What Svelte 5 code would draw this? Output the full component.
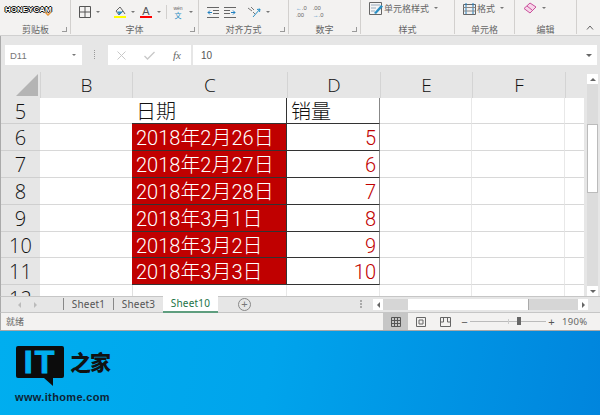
<script>
    const columns = [
        { name: "B", width: 92 },
        { name: "C", width: 155 },
        { name: "D", width: 93 },
        { name: "E", width: 92 },
        { name: "F", width: 93 },
        { name: "", width: 19 }
    ];

    const rows = [
        { num: 5, date: "日期", sales: "销量", head: true, height: 26 },
        { num: 6, date: "2018年2月26日", sales: 5, height: 27 },
        { num: 7, date: "2018年2月27日", sales: 6, height: 27 },
        { num: 8, date: "2018年2月28日", sales: 7, height: 27 },
        { num: 9, date: "2018年3月1日", sales: 8, height: 27 },
        { num: 10, date: "2018年3月2日", sales: 9, height: 26 },
        { num: 11, date: "2018年3月3日", sales: 10, height: 27 }
    ];

    const sheets = ["Sheet1", "Sheet3", "Sheet10"];
    const groups = [
        { label: "剪贴板", width: 70, launcher: true },
        { label: "字体", width: 128, launcher: true },
        { label: "对齐方式", width: 90, launcher: true },
        { label: "数字", width: 72, launcher: true },
        { label: "样式", width: 94 },
        { label: "单元格", width: 60 },
        { label: "编辑", width: 62 }
    ];
</script>

<div class="excel">
    <div class="ribbon">
        {#each groups as g, i}
            <div class="group" style={`width:${g.width}px`}>
                <div class="tools tools-{i}">
                    {#if i == 0}
                        <span class="honeycam">HONEYCAM</span>
                        <svg class="paste-hint" width="8" height="5" viewBox="0 0 8 5"><path d="M1 1l3 3 3-3" fill="none" stroke="#e8963c" stroke-width="1.500"/></svg>
                    {:else if i == 1}
                        <svg width="12" height="12" viewBox="0 0 12 12" class="ml8"><path d="M.5.500h11v11H.5zM6 .5v11M.5 6h11" fill="none" stroke="#555"/></svg>
                        <i class="caret"></i>
                        <span class="stack ml14">
                            <svg width="12" height="10" viewBox="0 0 12 10"><path d="M6 1 2 5l3 4 4-4zM9 5l2 3" fill="none" stroke="#666"/><path d="M3 5.500h6L5.500 9z" fill="#2a8fc4"/></svg>
                            <b class="bar yellow"></b>
                        </span>
                        <i class="caret"></i>
                        <span class="stack ml5">
                            <span class="letter-a">A</span>
                            <b class="bar red"></b>
                        </span>
                        <i class="caret"></i>
                        <span class="sep-v"></span>
                        <span class="wen"><small>wén</small><em>文</em></span>
                        <i class="caret"></i>
                    {:else if i == 2}
                        <svg width="12" height="11" viewBox="0 0 12 11" class="ml8"><path d="M0 .5h12M6 3.500h6M6 6.500h6M0 10.500h12" stroke="#666" fill="none"/><path d="M5 5.500H1M3 3.500l-2 2 2 2" stroke="#1f7fc0" fill="none"/></svg>
                        <svg width="12" height="11" viewBox="0 0 12 11" class="ml5"><path d="M0 .5h12M0 3.500h6M0 6.500h6M0 10.500h12" stroke="#666" fill="none"/><path d="M7 5.500h4M9 3.500l2 2-2 2" stroke="#1f7fc0" fill="none"/></svg>
                        <svg width="14" height="12" viewBox="0 0 14 12" class="ml11"><path d="M1 2l4 3M4 1l3 3M6 6l2 2" stroke="#777" fill="none"/><path d="M6 11 13 3M13 3l-3 .5M13 3l-.5 3" stroke="#2a8fc4" fill="none"/></svg>
                        <i class="caret"></i>
                    {:else if i == 3}
                        <span class="dec ml7"><small><u>←</u>.0</small><small>.00</small></span>
                        <span class="dec ml6"><small>.00</small><small><u>→</u>.0</small></span>
                    {:else if i == 4}
                        <svg width="14" height="13" viewBox="0 0 14 13" class="ml8"><path d="M.5.500h12v12H.5z" fill="#f5f5f5" stroke="#666"/><path d="M2 3h9M2 6h5M2 9h4" stroke="#9ab"/><path d="M5 11 12 3l2 1.500L7 12z" fill="#2a8fc4"/></svg>
                        <span class="tool-text">单元格样式</span>
                        <i class="caret"></i>
                    {:else if i == 5}
                        <svg width="13" height="13" viewBox="0 0 13 13" class="ml8"><path d="M.5 2.500h12v10H.5z" fill="none" stroke="#666"/><path d="M3 1v11M10 1v11" stroke="#1f7fc0"/><path d="M.5 5.500h12M.5 9h12" stroke="#888"/></svg>
                        <span class="tool-text">格式</span>
                        <i class="caret"></i>
                    {:else}
                        <svg width="14" height="12" viewBox="0 0 14 12" class="ml8"><path d="M1 6.500 7 1l6 4-6 6z" fill="#f6d5e8" stroke="#c94f9b"/><path d="M4 4l5 4" stroke="#c94f9b"/></svg>
                        <i class="caret"></i>
                    {/if}
                </div>
                <div class="group-label">{g.label}</div>
                {#if g.launcher}<i class="launcher"></i>{/if}
            </div>
        {/each}
        <svg class="collapse" width="8" height="5" viewBox="0 0 8 5"><path d="M1 4.500 4 1l3 3.500" fill="none" stroke="#666"/></svg>
    </div>

    <div class="formula-bar">
        <div class="name-box">D11<i class="caret"></i></div>
        <div class="grip"></div>
        <div class="fx-buttons">
            <svg width="9" height="9" viewBox="0 0 9 9"><path d="M.5.500l8 8M8.500.500l-8 8" stroke="#c8c8c8" fill="none"/></svg>
            <svg width="11" height="9" viewBox="0 0 11 9"><path d="M.5 5l3 3 7-7" stroke="#c8c8c8" stroke-width="1.300" fill="none"/></svg>
            <span class="fx">fx</span>
        </div>
        <div class="formula-input">10<i class="caret dark"></i></div>
    </div>

    <div class="sheet-area">
        <div class="grid">
            <div class="header-row">
                <div class="corner"><i></i></div>
                {#each columns as col}
                    <div class="col-head" style={`width:${col.width}px`}>{col.name}</div>
                {/each}
            </div>
            {#each rows as row}
                <div class="row" style={`height:${row.height}px`}>
                    <div class="row-head">{row.num}</div>
                    <div class="cell b"></div>
                    <div class="cell c" class:filled={!row.head} class:head={row.head}>{row.date}</div>
                    <div class="cell d" class:head={row.head}>{row.sales}</div>
                    <div class="cell e"></div>
                    <div class="cell f"></div>
                    <div class="cell g"></div>
                </div>
            {/each}
            <div class="row last">
                <div class="row-head clip"><span>12</span></div>
                <div class="cell b"></div>
                <div class="cell c"></div>
                <div class="cell d2"></div>
                <div class="cell e"></div>
                <div class="cell f"></div>
                <div class="cell g"></div>
            </div>
        </div>
        <div class="v-scroll">
            <div class="v-btn"><i class="up"></i></div>
            <div class="v-track"><div class="v-thumb"></div></div>
            <div class="v-btn"><i class="down"></i></div>
        </div>
    </div>

    <div class="tab-bar">
        <div class="tab-nav"><i class="left"></i><i class="right"></i></div>
        {#each sheets as s, i}
            <div class="tab" class:active={i == 2}>{s}</div>
        {/each}
        <div class="add-tab">+</div>
        <div class="h-grip"></div>
        <div class="h-scroll">
            <div class="h-btn"><i class="h-left"></i></div>
            <div class="h-track"><div class="h-thumb"></div></div>
            <div class="h-btn"><i class="h-right"></i></div>
        </div>
    </div>

    <div class="status-bar">
        <span class="ready">就绪</span>
        <div class="views">
            <div class="view on">
                <svg width="10" height="10" viewBox="0 0 10 10"><path d="M.5.500h9v9h-9zM3.500.500v9M6.500.500v9M.5 3.500h9M.5 6.500h9" fill="none" stroke="#555"/></svg>
            </div>
            <div class="view">
                <svg width="10" height="10" viewBox="0 0 10 10"><path d="M.5.500h9v9h-9z" fill="none" stroke="#666"/><path d="M3 3h4v4H3z" fill="none" stroke="#666"/></svg>
            </div>
            <div class="view">
                <svg width="11" height="10" viewBox="0 0 11 10"><path d="M.5.500h10v9H.5zM.5 5h3V.500M7.500.500V5h3" fill="none" stroke="#666"/></svg>
            </div>
        </div>
        <div class="zoom">
            <span class="zoom-sign">−</span>
            <div class="slider"><i class="mid"></i><i class="knob"></i></div>
            <span class="zoom-sign">+</span>
        </div>
        <span class="percent">190%</span>
    </div>

    <div class="footer">
        <div class="logo">
            <div class="logo-top">
                <div class="bubble">IT</div>
                <div class="logo-cn">之家</div>
            </div>
            <div class="site">www.ithome.com</div>
        </div>
    </div>
</div>

<style>
    :global(body) {
        margin: 0;
    }

    .excel {
        width: 600px;
        height: 415px;
        overflow: hidden;
        display: flex;
        flex-direction: column;
        background: #e6e6e6;
        font-family: "Noto Sans CJK SC", "Liberation Sans", sans-serif;
        color: #444;
    }

    .ribbon {
        height: 36px;
        flex: none;
        display: flex;
        background: #f3f2f1;
        border-bottom: 1px solid #d0d0d0;
        box-sizing: border-box;
        position: relative;
        padding-left: 1px;
    }

    .group {
        position: relative;
        box-sizing: border-box;
        border-right: 1px solid #d2d0ce;
        height: 34px;
        flex: none;
    }

    .tools {
        height: 24px;
        display: flex;
        align-items: center;
    }

    .tools-4, .tools-5, .tools-6 {
        height: 16px;
    }

    .group-label {
        position: absolute;
        left: 0;
        right: 0;
        top: 24px;
        text-align: center;
        font-size: 9px;
        line-height: 12px;
        color: #666;
    }

    .launcher {
        position: absolute;
        right: 3px;
        bottom: 2px;
        width: 4px;
        height: 4px;
        border-left: 1px solid #999;
        border-bottom: 1px solid #999;
        transform: scaleX(-1);
    }

    .honeycam {
        margin: -6px 0 0 4px;
        font: bold 8px "Liberation Sans", sans-serif;
        color: #fff;
        text-shadow: -1px 0 #000, 1px 0 #000, 0 -1px #000, 0 1px #000;
    }

    .paste-hint {
        position: absolute;
        left: 43px;
        top: 11px;
    }

    .caret {
        display: inline-block;
        width: 0;
        height: 0;
        margin-left: 5px;
        border: 2px solid transparent;
        border-top: 2px solid #777;
        border-bottom: 0;
    }

    .ml14 { margin-left: 14px; }
    .ml11 { margin-left: 11px; }
    .ml8 { margin-left: 8px; }
    .ml7 { margin-left: 7px; }
    .ml6 { margin-left: 6px; }
    .ml5 { margin-left: 5px; }

    .stack {
        display: inline-flex;
        flex-direction: column;
        align-items: center;
        width: 12px;
    }

    .bar {
        display: block;
        width: 12px;
        height: 2px;
    }

    .yellow { background: #ffff00; }
    .red { background: #ff0000; }

    .letter-a {
        font: 11px/10px "Liberation Sans", sans-serif;
        color: #555;
    }

    .sep-v {
        width: 1px;
        height: 14px;
        margin: 0 5px;
        background: #d2d0ce;
    }

    .wen {
        display: inline-flex;
        flex-direction: column;
        align-items: center;
        width: 12px;
    }

    .wen small {
        display: block;
        height: 6px;
        font: 5px/6px "Liberation Sans", sans-serif;
        color: #666;
    }

    .wen em {
        display: block;
        height: 8px;
        font-style: normal;
        font-size: 7px;
        line-height: 8px;
        color: #2a8fc4;
    }

    .dec {
        display: inline-flex;
        flex-direction: column;
        font: 7px/7px "Liberation Sans", sans-serif;
        color: #666;
    }

    .dec u {
        text-decoration: none;
        color: #1f7fc0;
    }

    .tool-text {
        margin-left: 1px;
        font-size: 9px;
        color: #666;
    }

    .collapse {
        position: absolute;
        right: 6px;
        bottom: 5px;
    }

    .formula-bar {
        height: 36px;
        flex: none;
        box-sizing: border-box;
        padding: 9px 3px 7px 4px;
        display: flex;
        border-left: 1px solid #aaa;
    }

    .name-box {
        width: 77px;
        background: #fff;
        font: 9.500px/19px "Liberation Sans", sans-serif;
        padding-left: 5px;
        box-sizing: border-box;
        color: #777;
        display: flex;
        justify-content: space-between;
        align-items: center;
        padding-right: 6px;
    }

    .grip {
        width: 1px;
        height: 9px;
        margin: 5px 12px 0;
        border-left: 1px dotted #999;
    }

    .fx-buttons {
        width: 83px;
        background: #fff;
        margin-right: 2px;
        display: flex;
        align-items: center;
        gap: 18px;
        padding-left: 9px;
        box-sizing: border-box;
    }

    .fx {
        font: italic 11px "Liberation Serif", serif;
        color: #666;
    }

    .formula-input {
        flex: 1;
        background: #fff;
        font: 10px/19px "Liberation Sans", sans-serif;
        padding: 0 5px 0 8px;
        color: #555;
        display: flex;
        justify-content: space-between;
        align-items: center;
    }

    .caret.dark {
        border-width: 3px;
        border-top-color: #666;
        border-bottom: 0;
    }

    .sheet-area {
        height: 224px;
        flex: none;
        display: flex;
        border-left: 1px solid #aaa;
    }

    .grid {
        width: 583px;
        flex: none;
        overflow: hidden;
    }

    .header-row {
        display: flex;
        height: 26px;
        background: #e6e6e6;
    }

    .corner {
        width: 39px;
        flex: none;
        box-sizing: border-box;
        padding: 2px 2px 2px 15px;
    }

    .corner i {
        display: block;
        width: 22px;
        height: 22px;
        background: #b4b4b4;
        clip-path: polygon(100% 0, 100% 100%, 0 100%);
    }

    .col-head {
        flex: none;
        box-sizing: border-box;
        border-left: 1px solid #d4d4d4;
        text-align: center;
        font: 300 19px/26px "Open Sans", sans-serif;
        color: #111;
    }

    .row {
        display: flex;
        box-sizing: border-box;
    }

    .row.last {
        height: 11px;
    }

    .row-head {
        width: 39px;
        flex: none;
        background: #e6e6e6;
        box-sizing: border-box;
        border-bottom: 1px solid #cfcfcf;
        text-align: center;
        font: 300 20px/27px "Open Sans", sans-serif;
        color: #111;
    }

    .row-head.clip {
        overflow: hidden;
        border-bottom: 0;
    }

    .cell {
        flex: none;
        background: #fff;
        box-sizing: border-box;
        border-right: 1px solid #e8e8e8;
        border-bottom: 1px solid #d8d8d8;
    }

    .row.last .cell {
        border-bottom: 0;
    }

    .b { width: 92px; border-right: 0; }
    .e { width: 92px; }
    .f { width: 93px; }
    .g { width: 20px; border-right: 1px solid #bbb; }

    .c {
        width: 155px;
        padding-left: 3px;
        padding-top: 3px;
        font-family: "Roboto", "Noto Sans CJK SC", sans-serif;
        font-weight: 300;
        font-size: 20px;
        line-height: 23px;
        white-space: nowrap;
        border-left: 1px solid #e0e0e0;
    }

    .c.head {
        color: #111;
        border-left: 0;
        padding-left: 4px;
        border-right: 1px solid #333;
        border-bottom: 1px solid #333;
    }

    .c.filled {
        background: #c00000;
        color: #fff;
        border-left: 0;
        padding-left: 4px;
        border-right: 1px solid #333;
        border-bottom: 1px solid #333;
    }

    .d {
        width: 93px;
        padding-right: 3px;
        padding-top: 3px;
        text-align: right;
        font-family: "Roboto", "Noto Sans CJK SC", sans-serif;
        font-weight: 300;
        font-size: 20px;
        line-height: 23px;
        color: #c00000;
        border-right: 1px solid #888;
        border-bottom: 1px solid #333;
    }

    .d.head {
        color: #111;
        text-align: left;
        padding-left: 4px;
    }

    .d2 {
        width: 93px;
    }

    .v-scroll {
        width: 11px;
        flex: none;
        margin: 2px 0 0 3px;
        background: #dcdcdc;
        display: flex;
        flex-direction: column;
    }

    .v-track {
        flex: 1;
        padding-top: 40px;
    }

    .v-thumb {
        height: 69px;
        background: #fff;
        box-shadow: 0 0 0 1px #bbb inset;
    }

    .v-btn {
        height: 10px;
        background: #fff;
        display: flex;
        align-items: center;
        justify-content: center;
    }

    .up, .down {
        width: 0;
        height: 0;
        border: 3px solid transparent;
    }

    .up {
        border-bottom: 3px solid #666;
        border-top: 0;
    }

    .down {
        border-top: 3px solid #666;
        border-bottom: 0;
    }

    .tab-bar {
        height: 17px;
        flex: none;
        box-sizing: border-box;
        display: flex;
        align-items: stretch;
        border-top: 1px solid #c6c6c6;
        border-bottom: 1px solid #c6c6c6;
        border-left: 1px solid #aaa;
        background: #e6e6e6;
    }

    .tab-nav {
        width: 62px;
        flex: none;
        display: flex;
        gap: 13px;
        padding-left: 17px;
        box-sizing: border-box;
        align-items: center;
    }

    .left, .right {
        width: 0;
        height: 0;
        border: 3px solid transparent;
    }

    .left {
        border-right: 3px solid #bbb;
        border-left: 0;
    }

    .right {
        border-left: 3px solid #bbb;
        border-right: 0;
    }

    .tab {
        border-left: 1px solid #888;
        margin: 1px 0 2px;
        width: 49px;
        font: 10px/12px "Noto Sans", sans-serif;
        letter-spacing: .2px;
        text-align: center;
        color: #555;
    }

    .tab.active {
        border: 0;
        margin: -1px 0 -1px;
        width: 55px;
        line-height: 15px;
        background: #fff;
        color: #217346;
        border-bottom: 2px solid #5f9e7f;
        box-sizing: border-box;
    }

    .add-tab {
        width: 11px;
        height: 11px;
        margin: 1px 0 0 20px;
        border: 1px solid #888;
        border-radius: 50%;
        color: #777;
        font: 11px/10px "Liberation Sans", sans-serif;
        text-align: center;
    }

    .h-grip {
        width: 2px;
        height: 8px;
        margin: 3px 9px 0 109px;
        border-left: 2px dotted #aaa;
    }

    .h-scroll {
        width: 215px;
        margin-top: 2px;
        margin-bottom: 2px;
        display: flex;
        background: #d6d6d6;
    }

    .h-btn {
        width: 10px;
        background: #fff;
        display: flex;
        align-items: center;
        justify-content: center;
    }

    .h-left, .h-right {
        width: 0;
        height: 0;
        border: 3px solid transparent;
    }

    .h-left {
        border-right: 3px solid #666;
        border-left: 0;
    }

    .h-right {
        border-left: 3px solid #666;
        border-right: 0;
    }

    .h-track {
        flex: 1;
        padding-left: 25px;
    }

    .h-thumb {
        width: 120px;
        height: 100%;
        background: #fff;
        border-right: 1px solid #aaa;
    }

    .status-bar {
        height: 18px;
        flex: none;
        box-sizing: border-box;
        display: flex;
        align-items: center;
        background: #f3f2f1;
        border-left: 1px solid #aaa;
        border-bottom: 1px solid #a8a8a8;
        font-size: 9px;
        color: #666;
    }

    .ready {
        width: 382px;
        padding-left: 5px;
        box-sizing: border-box;
    }

    .views {
        display: flex;
        height: 17px;
    }

    .view {
        width: 25px;
        display: flex;
        align-items: center;
        justify-content: center;
    }

    .view.on {
        background: #c6c6c6;
    }

    .zoom {
        display: flex;
        align-items: center;
        margin-left: 3px;
    }

    .zoom-sign {
        font: 11px/12px "Liberation Sans", sans-serif;
        color: #555;
        width: 7px;
        text-align: center;
    }

    .slider {
        position: relative;
        width: 76px;
        height: 1px;
        background: #bbb;
        margin: 0 2px;
    }

    .mid {
        position: absolute;
        left: 38px;
        top: -2px;
        width: 1px;
        height: 5px;
        background: #ccc;
    }

    .knob {
        position: absolute;
        left: 47px;
        top: -4px;
        width: 4px;
        height: 8px;
        background: #666;
    }

    .percent {
        margin-left: 7px;
        font: 9.500px "Noto Sans", sans-serif;
        letter-spacing: .3px;
    }

    .footer {
        flex: 1;
        background: linear-gradient(100deg, #00aeef 0%, #00a4ec 45%, #0085dd 100%);
        padding: 15px 0 0 15px;
    }

    .logo-top {
        display: flex;
        align-items: flex-start;
        gap: 6px;
    }

    .bubble {
        position: relative;
        width: 48px;
        height: 32px;
        margin-left: 1px;
        background: #0c0c0c;
        border-radius: 2px;
        color: #00aeef;
        font: 900 32px/32px "Liberation Sans", sans-serif;
        -webkit-text-stroke: 1px #00aeef;
        letter-spacing: 2px;
        text-align: center;
    }

    .bubble::after {
        content: "";
        position: absolute;
        left: 28px;
        top: 32px;
        border-left: 9px solid transparent;
        border-top: 8px solid #0c0c0c;
    }

    .logo-cn {
        font: 900 21px/30px "Noto Sans CJK SC", sans-serif;
        color: #111;
        letter-spacing: -1px;
    }

    .site {
        margin-top: 13px;
        font: bold 11px/12px "Liberation Sans", sans-serif;
        letter-spacing: .35px;
        color: #0d2436;
    }
</style>
